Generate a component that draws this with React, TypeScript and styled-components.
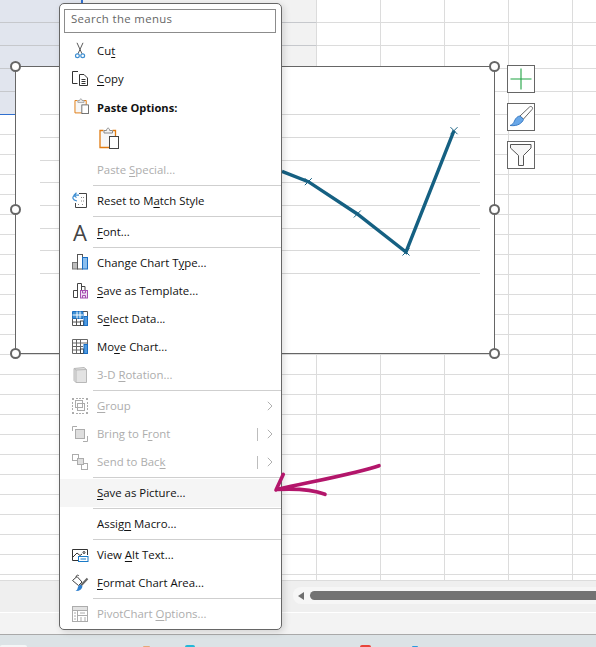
import React from "react";
import styled, { createGlobalStyle } from "styled-components";

const Global = createGlobalStyle`
  html, body { margin: 0; padding: 0; background: #fff; }
  * { box-sizing: border-box; }
`;

const Page = styled.div`
  width: 596px;
  height: 647px;
  overflow: hidden;
  display: flex;
  flex-direction: column;
  position: relative;
  font-family: "Open Sans", "Liberation Sans", sans-serif;
  background: #fff;
`;

const Sheet = styled.div`
  position: relative;
  height: 580px;
  flex: none;
  overflow: hidden;
  display: grid;
  grid-template-columns: 83px 234px 64px 64px 64px 64px 23px;
  grid-template-rows: repeat(5, 23px);
  grid-auto-rows: 20px;
`;

type Tone = "selected" | "shaded" | "plain";

const Cell = styled.div<{ $tone: Tone; $last?: boolean; $open?: boolean }>`
  border-bottom: 1px solid
    ${(p) => (p.$last ? "#2f6fcf" : p.$tone === "plain" ? "#dcdcdc" : "#c6c8cc")};
  border-right: ${(p) =>
    p.$tone === "selected" ? "2px solid #2f6fcf" : p.$open ? "none" : "1px solid #dcdcdc"};
  background: ${(p) =>
    p.$tone === "selected" ? "#e1e5ee" : p.$tone === "shaded" ? "#f2f2f2" : "#fff"};
  ${(p) => (p.$last ? "box-shadow: 0 1px 0 #2f6fcf;" : "")}
`;

const Chart = styled.div`
  position: absolute;
  left: 15px;
  top: 66px;
  width: 480px;
  height: 288px;
  border: 1px solid #666;
  background: #fff;
`;

const Plot = styled.svg`
  display: block;
`;

const Handle = styled.span<{ $x: string; $y: string }>`
  position: absolute;
  left: ${(p) => p.$x};
  top: ${(p) => p.$y};
  width: 11px;
  height: 11px;
  margin: -5.5px 0 0 -5.5px;
  border-radius: 50%;
  border: 2px solid #666;
  background: #fff;
`;

const ChartTools = styled.div`
  position: absolute;
  left: 507px;
  top: 65px;
  display: flex;
  flex-direction: column;
  gap: 10px;
`;

const ToolButton = styled.div`
  width: 28px;
  height: 28px;
  border: 1px solid #666;
  background: #fff;
  display: flex;
`;

const Menu = styled.div`
  position: absolute;
  left: 59px;
  top: 3px;
  width: 223px;
  height: 627px;
  border: 1px solid #666;
  border-radius: 5px;
  background: #fff;
  box-shadow: 2px 2px 7px rgba(0, 0, 0, 0.14);
  z-index: 2;
  font-size: 11.4px;
  color: #111;
`;

const SearchBox = styled.div`
  margin: 5px 0 3px 4px;
  width: 212px;
  height: 24px;
  border: 1px solid #8c8c8c;
  padding: 0 0 5px 6px;
  display: flex;
  align-items: center;
  color: #666;
  letter-spacing: 0.35px;
`;

const Group = styled.div`
  padding: 1px 0;
`;

const Separator = styled.div`
  height: 1px;
  margin-left: 33px;
  background: #cfcfcf;
`;

const Row = styled.div<{ $disabled?: boolean; $hover?: boolean }>`
  height: 28px;
  display: flex;
  align-items: center;
  padding-left: 11px;
  color: ${(p) => (p.$disabled ? "#adadad" : "#111")};
  background: ${(p) => (p.$hover ? "#f5f5f5" : "transparent")};
`;

const Heading = styled(Row)`
  margin-top: 1px;
  font-weight: 700;
  font-size: 11.1px;
`;

const IconSlot = styled.span`
  width: 26px;
  flex: none;
  height: 18px;
  display: flex;
`;

const SmallPaste = styled.span`
  margin: -1px 0 0 3px;
  display: flex;
`;

const Label = styled.span`
  flex: 1;
  white-space: nowrap;
  padding-bottom: 2px;
  u {
    text-underline-offset: 2px;
    text-decoration-thickness: 1px;
  }
`;

const PasteRow = styled.div`
  height: 34px;
  padding: 5px 0 0 39px;
`;

const FontGlyph = styled.span`
  font-size: 22px;
  font-weight: 400;
  line-height: 18px;
  width: 18px;
  text-align: center;
  color: #444;
`;

const Tail = styled.span`
  display: flex;
  align-items: center;
  width: 26px;
  flex: none;
  height: 14px;
  justify-content: flex-end;
  padding-right: 8px;
`;

const Pipe = styled.span`
  width: 1px;
  height: 13px;
  background: #bdbdbd;
  margin-right: 9px;
`;

const ScrollArea = styled.div`
  height: 33px;
  flex: none;
  background: #efefef;
  border-top: 1px solid #dcdcdc;
  border-bottom: 1px solid #fff;
  padding: 6px 0 0 293px;
`;

const ScrollTrack = styled.div`
  height: 17px;
  background: #f6f6f6;
  border-radius: 8px 0 0 8px;
  display: flex;
  align-items: center;
  padding-left: 5px;
  gap: 6px;
`;

const ScrollArrow = styled.span`
  width: 0;
  height: 0;
  border-top: 4.5px solid transparent;
  border-bottom: 4.5px solid transparent;
  border-right: 6px solid #6e6e6e;
`;

const ScrollThumb = styled.span`
  flex: 1;
  height: 9px;
  background: #737373;
  border-radius: 5px 0 0 5px;
`;

const StatusBar = styled.div`
  height: 21px;
  flex: none;
  background: #f3f3f3;
`;

const Desktop = styled.div`
  flex: 1;
  border-top: 1px solid #a9a9a9;
  background: #dce3e6;
  display: flex;
  align-items: flex-end;
`;

const TaskIcon = styled.span<{ $gap: number; $w: number; $h: number; $c: string }>`
  margin-left: ${(p) => p.$gap}px;
  width: ${(p) => p.$w}px;
  height: ${(p) => p.$h}px;
  background: ${(p) => p.$c};
  border-radius: 6px 6px 0 0;
`;

const Annotation = styled.svg`
  position: absolute;
  left: 0;
  top: 0;
  z-index: 3;
  pointer-events: none;
`;

const BLUE = "#3f8fd2";
const GREY = "#acacac";

const Ic: React.FC<{ children: React.ReactNode }> = ({ children }) => (
  <svg width="18" height="18" viewBox="0 0 18 18" fill="none" strokeWidth="1">
    {children}
  </svg>
);

const PasteGlyph: React.FC<{ w: number; h: number }> = ({ w, h }) => (
  <svg width={w} height={h} viewBox="0 0 20 22" fill="none">
    <path d="M1 3.5H16.5V20.5H1Z" fill="#f7f7f7" />
    <path d="M4.5 3.5H1V20.5H10M13.5 3.5H16.5V9" stroke="#e07b10" strokeWidth="1.3" />
    <path d="M5 6V3.5H7.5C7.7 .4 10.5 .4 10.7 3.5H13.5V6Z" fill="#f2f2f2" stroke="#8a8a8a" />
    <rect x="10.5" y="9.5" width="9" height="12" fill="#fff" stroke="#444" />
  </svg>
);

const icons = {
  cut: (
    <Ic>
      <path d="M6 .8L11 11.8M12 .8L7 11.8" stroke="#5a5a5a" />
      <circle cx="6.4" cy="13.8" r="1.9" stroke={BLUE} strokeWidth="1.2" />
      <circle cx="11.7" cy="13.8" r="1.9" stroke={BLUE} strokeWidth="1.2" />
    </Ic>
  ),
  copy: (
    <Ic>
      <path d="M7 1.5H1.5V13.5H6.5" stroke="#333" />
      <path d="M8.5 4.5H13L16.5 8V15.5H8.5ZM10.5 9.5H14.5M10.5 11.5H14.5M10.5 13.5H14.5" stroke="#333" />
    </Ic>
  ),
  reset: (
    <Ic>
      <path d="M8 1.5H15.5V15.5H4.5V11" stroke="#444" />
      <path d="M10 5.5H13M7 12.5H9M11 12.5H13M10 9H13" stroke="#888" strokeDasharray="1 1" />
      <path d="M8 3.2H5C2.5 3.2 1.5 5 2 6.5C2.5 8 4 8.5 6 9M5.5 .8L3 3.2L5.5 5.6" stroke={BLUE} strokeWidth="1.2" />
    </Ic>
  ),
  bars: (
    <Ic>
      <rect x="1.5" y="8.5" width="5" height="6.5" fill="#bdbdbd" stroke="#777" />
      <rect x="6.5" y=".5" width="5" height="14.5" fill="#fff" stroke="#555" />
      <rect x="11.5" y="3.5" width="5" height="11.5" fill="#8cbfee" stroke="#1b6ec2" />
    </Ic>
  ),
  template: (
    <Ic>
      <path d="M2.5 8.5H6.5V15.5H2.5ZM6.5 15.5V1.5H10.5V8M10.5 4.5H14V8" stroke="#444" />
      <rect x="9.5" y="8.5" width="7" height="7.5" fill="#efdff2" stroke="#a64fb0" />
      <path d="M11.5 8.5V11H14.5V8.5M11.5 16V13.5H14.5V16" stroke="#a64fb0" />
    </Ic>
  ),
  select: (
    <Ic>
      <path d="M1.5 1.5H12V8.5H1.5Z" fill="#3f8fd2" stroke="#1b6ec2" />
      <path d="M6 1.5V8.5M9 1.5V8.5M1.5 5H12" stroke="#fff" />
      <path d="M12 1.5H16.5V6M1.5 8.5V15.5H9.5M1.5 12H9.5M5.5 8.5V15.5" stroke="#555" />
      <rect x="9.5" y="11" width="3" height="4.5" fill="#fff" stroke="#444" />
      <rect x="13" y="6.5" width="3.5" height="9" fill="#4f9ae0" stroke="#1b6ec2" />
    </Ic>
  ),
  move: (
    <Ic>
      <path d="M9.5 15.5H1.5V1.5H16.5V6M1.5 5H16.5M1.5 8.5H12M1.5 12H9.5M5.5 1.5V15.5M9.5 1.5V11" stroke="#666" />
      <rect x="9.5" y="11" width="3" height="4.5" fill="#fff" stroke="#444" />
      <rect x="13" y="6.5" width="3.5" height="9" fill="#4f9ae0" stroke="#1b6ec2" />
    </Ic>
  ),
  rotate: (
    <Ic>
      <path d="M3 2.5L13 1.5L15.5 3.5V16.5H5L3 14.5Z" fill="#e3e3e3" stroke="#b8b8b8" />
      <path d="M5 4V16.5M5 4L15.5 3.5M3 2.5L5 4" stroke="#b8b8b8" />
    </Ic>
  ),
  group: (
    <Ic>
      <path d="M1 1H3V3H1ZM15 1H17V3H15ZM1 15H3V17H1ZM15 15H17V17H15Z" fill={GREY} />
      <path d="M5 1.5H13M5 16.5H13M1.5 5V13M16.5 5V13" stroke={GREY} strokeDasharray="2 1" />
      <rect x="4.5" y="3.5" width="7" height="7" stroke={GREY} />
      <rect x="6.5" y="6.5" width="7" height="7" stroke={GREY} />
    </Ic>
  ),
  front: (
    <Ic>
      <path d="M1.5 6V1.5H6M16.5 11V16.5H12" stroke={GREY} />
      <rect x="4.5" y="4.5" width="9" height="9" fill="#dedede" stroke={GREY} />
    </Ic>
  ),
  back: (
    <Ic>
      <rect x="1.5" y="1.5" width="6" height="6" stroke={GREY} />
      <rect x="10.5" y="10.5" width="6" height="6" stroke={GREY} />
      <rect x="6.5" y="5.5" width="6" height="6" fill="#dedede" stroke={GREY} />
    </Ic>
  ),
  alt: (
    <Ic>
      <path d="M7 14.5H1.5V3.5H16.5V9" stroke="#333" />
      <path d="M2 11L6 7L9 9.5L11 8" stroke="#333" />
      <circle cx="13" cy="6.5" r="1" stroke="#333" />
      <rect x="7.5" y="10.5" width="9.5" height="5" fill="#fff" stroke="#1b7ac7" />
      <path d="M9.5 13H15" stroke="#1b7ac7" />
    </Ic>
  ),
  format: (
    <Ic>
      <path d="M1.5 6.5L6 2.5L11 8L7.5 11.5Z" stroke="#444" fill="#fff" />
      <path d="M5 3.5C5 1 7 .5 8 2" stroke="#444" />
      <path d="M16.5 4.5L10 11.5" stroke="#666" strokeWidth="2" />
      <path d="M9.5 10.5L11.5 12.5C11 15.5 8 17.5 4.5 17C6.5 16 6.5 14.5 7 13C7.5 11.5 8.5 11 9.5 10.5Z" fill="#2f80d0" />
    </Ic>
  ),
  pivot: (
    <Ic>
      <rect x="1.5" y="1.5" width="15" height="15" stroke={GREY} />
      <rect x="2" y="2" width="14" height="3" fill="#e2e2e2" />
      <path d="M1.5 5.5H16.5M6.5 5.5V16.5M6.5 10.5H16.5M3 8H5M3 11H5M3 14H5M9 8H14" stroke={GREY} />
      <path d="M9 13H11M13 13H15M9 15H11M13 15H15" stroke={GREY} />
    </Ic>
  ),
};

const Chevron = () => (
  <svg width="6" height="10" viewBox="0 0 6 10" fill="none">
    <path d="M.8 .8L5 5L.8 9.2" stroke="#b0b0b0" strokeWidth="1" />
  </svg>
);

type Item = {
  icon?: React.ReactNode;
  label: React.ReactNode;
  disabled?: boolean;
  hover?: boolean;
  chevron?: boolean;
  pipe?: boolean;
};

const groups: Item[][] = [
  [{ icon: icons.reset, label: <>Reset to M<u>a</u>tch Style</> }],
  [{ icon: <FontGlyph>A</FontGlyph>, label: <><u>F</u>ont...</> }],
  [
    { icon: icons.bars, label: <>Change Chart T<u>y</u>pe...</> },
    { icon: icons.template, label: <><u>S</u>ave as Template...</> },
    { icon: icons.select, label: <>S<u>e</u>lect Data...</> },
    { icon: icons.move, label: <>Mo<u>v</u>e Chart...</> },
    { icon: icons.rotate, label: <>3-D <u>R</u>otation...</>, disabled: true },
  ],
  [
    { icon: icons.group, label: <><u>G</u>roup</>, disabled: true, chevron: true },
    { icon: icons.front, label: <>Bring to F<u>r</u>ont</>, disabled: true, chevron: true, pipe: true },
    { icon: icons.back, label: <>Send to Bac<u>k</u></>, disabled: true, chevron: true, pipe: true },
  ],
  [{ label: <><u>S</u>ave as Picture...</>, hover: true }],
  [{ label: <>Assig<u>n</u> Macro...</> }],
  [
    { icon: icons.alt, label: <>View <u>A</u>lt Text...</> },
    { icon: icons.format, label: <><u>F</u>ormat Chart Area...</> },
  ],
  [{ icon: icons.pivot, label: <>PivotChart <u>O</u>ptions...</>, disabled: true }],
];

const MenuRow: React.FC<{ item: Item }> = ({ item }) => (
  <Row $disabled={item.disabled} $hover={item.hover}>
    <IconSlot>{item.icon}</IconSlot>
    <Label>{item.label}</Label>
    {item.chevron && (
      <Tail>
        {item.pipe && <Pipe />}
        <Chevron />
      </Tail>
    )}
  </Row>
);

const rowCount = 29;
const cells = Array.from({ length: rowCount * 7 }, (_, i) => {
  const r = Math.floor(i / 7);
  const c = i % 7;
  const tone: Tone = c === 0 && r < 5 ? "selected" : c === 1 && r < 3 ? "shaded" : "plain";
  return <Cell key={i} $tone={tone} $last={c === 0 && r === 4} $open={c === 0 || c === 6} />;
});

const gridYs = [47, 70, 93, 115, 138, 161, 183, 206];
const points: [number, number][] = [
  [266, 104.3],
  [292.3, 114.7],
  [341.3, 147],
  [390, 185],
  [438, 63.7],
];
const marks = points.slice(1);

const handles: [string, string][] = [
  ["15.5px", "66.5px"],
  ["494.5px", "66.5px"],
  ["15.5px", "209.5px"],
  ["494.5px", "209.5px"],
  ["15.5px", "353.5px"],
  ["494.5px", "353.5px"],
];

export default function App() {
  return (
    <Page>
      <Global />
      <Sheet>
        {cells}
        <Chart>
          <Plot width="478" height="286" viewBox="0 0 478 286" fill="none">
            {gridYs.map((y) => (
              <line key={y} x1="24" x2="464" y1={y + 0.5} y2={y + 0.5} stroke="#d9d9d9" />
            ))}
            <polyline points={points.map((p) => p.join(",")).join(" ")} stroke="#156082" strokeWidth="3.4" />
            {marks.map(([x, y]) => (
              <path
                key={x}
                d={`M${x - 3.5} ${y - 3.5}L${x + 3.5} ${y + 3.5}M${x + 3.5} ${y - 3.5}L${x - 3.5} ${y + 3.5}`}
                stroke="#156082"
              />
            ))}
          </Plot>
        </Chart>
        {handles.map(([x, y]) => (
          <Handle key={x + y} $x={x} $y={y} />
        ))}
        <ChartTools>
          <ToolButton>
            <svg width="26" height="26" viewBox="0 0 26 26" fill="none">
              <path d="M2.5 13H23.5M13 2.5V23.5" stroke="#1fa343" strokeWidth="1.1" />
            </svg>
          </ToolButton>
          <ToolButton>
            <svg width="26" height="26" viewBox="0 0 26 26" fill="none">
              <path d="M24 3C25 4 24.5 5 24 5.5L15.5 15L12 12L21.5 3C22.5 2.2 23.3 2.3 24 3Z" fill="#fff" stroke="#666" />
              <path d="M12 12L15.5 15.5C14 19 10 22.5 2 21.5C5 20.5 5.5 19 6.5 17C7.5 14 10 12 12 12Z" fill="#68a7e8" stroke="#3b7cc4" />
            </svg>
          </ToolButton>
          <ToolButton>
            <svg width="26" height="26" viewBox="0 0 26 26" fill="none">
              <path d="M2.5 2.5H23V6L15.5 13.5V23.5H10.5V13.5L2.5 6Z" fill="#f7f7f7" stroke="#555" />
            </svg>
          </ToolButton>
        </ChartTools>
      </Sheet>
      <ScrollArea>
        <ScrollTrack>
          <ScrollArrow />
          <ScrollThumb />
        </ScrollTrack>
      </ScrollArea>
      <StatusBar />
      <Desktop>
        <TaskIcon $gap={0} $w={27} $h={2} $c="#f4f6f7" />
        <TaskIcon $gap={116} $w={7} $h={1} $c="#e8a878" />
        <TaskIcon $gap={35} $w={10} $h={2} $c="#22b8d8" />
        <TaskIcon $gap={165} $w={11} $h={2} $c="#e8443a" />
        <TaskIcon $gap={41} $w={6} $h={1} $c="#2a9be0" />
      </Desktop>
      <Menu>
        <SearchBox>Search the menus</SearchBox>
        <Group>
          <Row>
            <IconSlot>{icons.cut}</IconSlot>
            <Label>Cu<u>t</u></Label>
          </Row>
          <Row>
            <IconSlot>{icons.copy}</IconSlot>
            <Label><u>C</u>opy</Label>
          </Row>
          <Heading>
            <IconSlot>
              <SmallPaste><PasteGlyph w={15} h={16} /></SmallPaste>
            </IconSlot>
            <Label>Paste Options:</Label>
          </Heading>
          <PasteRow><PasteGlyph w={20} h={22} /></PasteRow>
          <Row $disabled>
            <IconSlot />
            <Label>Paste <u>S</u>pecial...</Label>
          </Row>
        </Group>
        {groups.map((g, i) => (
          <React.Fragment key={i}>
            <Separator />
            <Group>
              {g.map((item, j) => (
                <MenuRow key={j} item={item} />
              ))}
            </Group>
          </React.Fragment>
        ))}
      </Menu>
      <Annotation width="596" height="647" viewBox="0 0 596 647" fill="none">
        <path
          d="M379 465.7C362 472 320 480 277 489.5C295 488.5 312 489.5 325 494.3M283.3 474.3L276 490"
          stroke="#b3166b"
          strokeWidth="3.6"
          strokeLinecap="round"
          strokeLinejoin="round"
        />
      </Annotation>
    </Page>
  );
}
